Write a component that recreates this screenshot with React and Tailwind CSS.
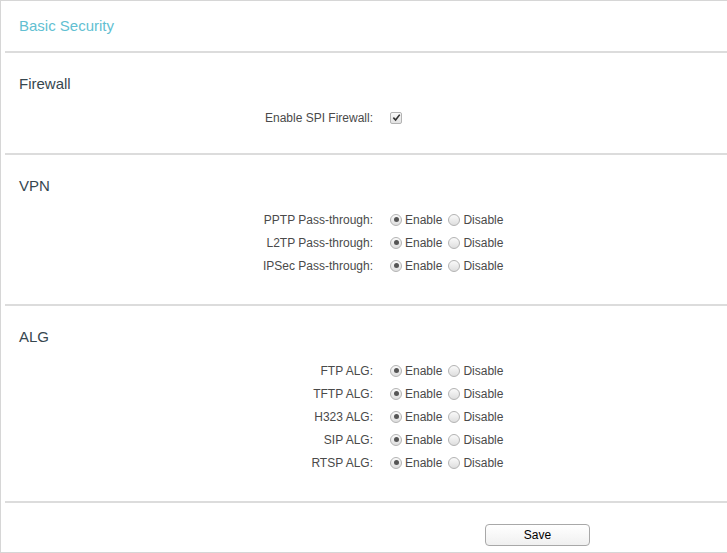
import React from "react";

const vpnRows = ["PPTP Pass-through:", "L2TP Pass-through:", "IPSec Pass-through:"];
const algRows = ["FTP ALG:", "TFTP ALG:", "H323 ALG:", "SIP ALG:", "RTSP ALG:"];

const Radio = ({ checked }) => (
  <span className="flex h-[12px] w-[12px] items-center justify-center rounded-full border border-[#b3b3b3] bg-gradient-to-b from-[#fafafa] to-[#dedede]">
    {checked && <span className="h-[5px] w-[5px] rounded-full bg-[#555]" />}
  </span>
);

const Checkbox = () => (
  <span className="flex h-[12px] w-[12px] items-center justify-center rounded-[2px] border border-[#b3b3b3] bg-gradient-to-b from-[#fafafa] to-[#e2e2e2]">
    <svg width="9" height="9" viewBox="0 0 10 10">
      <path d="M1.5 5.2 L4 7.8 L8.6 1.8" fill="none" stroke="#333" strokeWidth="1.8" />
    </svg>
  </span>
);

const Row = ({ label, children }) => (
  <div className="flex h-[23px] items-center">
    <div className="w-[372px] text-right">{label}</div>
    <div className="ml-[17px] flex items-center">{children}</div>
  </div>
);

const EnableDisable = () => (
  <>
    <Radio checked />
    <span className="ml-[3px]">Enable</span>
    <span className="ml-[6px]">
      <Radio />
    </span>
    <span className="ml-[3px]">Disable</span>
  </>
);

const Line = () => <div className="ml-[4px] h-[2px] bg-[#dcdcdc]" />;

const Section = ({ title, children, last }) => (
  <div className={last ? "pt-[21px] pb-[27px]" : "pt-[21px] pb-[24px]"}>
    <div className="flex h-[20px] items-center pl-[18px] text-[15px] text-[#36474f]">{title}</div>
    <div className="mt-[12px]">{children}</div>
  </div>
);

export default function App() {
  return (
    <div className="min-h-[553px] bg-white font-['Liberation_Sans',Arial,sans-serif] text-[12px] text-[#4a4a4a]">
      <div className="w-[760px] border-t border-b border-l border-[#d6d6d6]">
        <div className="flex h-[50px] items-center pl-[18px] text-[15px] text-[#62bfd2]">Basic Security</div>
        <Line />
        <Section title="Firewall">
          <Row label="Enable SPI Firewall:">
            <Checkbox />
          </Row>
        </Section>
        <Line />
        <Section title="VPN" last>
          {vpnRows.map((r) => (
            <Row key={r} label={r}>
              <EnableDisable />
            </Row>
          ))}
        </Section>
        <Line />
        <Section title="ALG" last>
          {algRows.map((r) => (
            <Row key={r} label={r}>
              <EnableDisable />
            </Row>
          ))}
        </Section>
        <Line />
        <div className="pt-[21px] pb-[6px] pl-[484px]">
          <button className="h-[22px] w-[105px] rounded-[4px] border border-[#a8a8a8] bg-gradient-to-b from-white to-[#f0f0f0] text-[12px] text-black">
            Save
          </button>
        </div>
      </div>
    </div>
  );
}
